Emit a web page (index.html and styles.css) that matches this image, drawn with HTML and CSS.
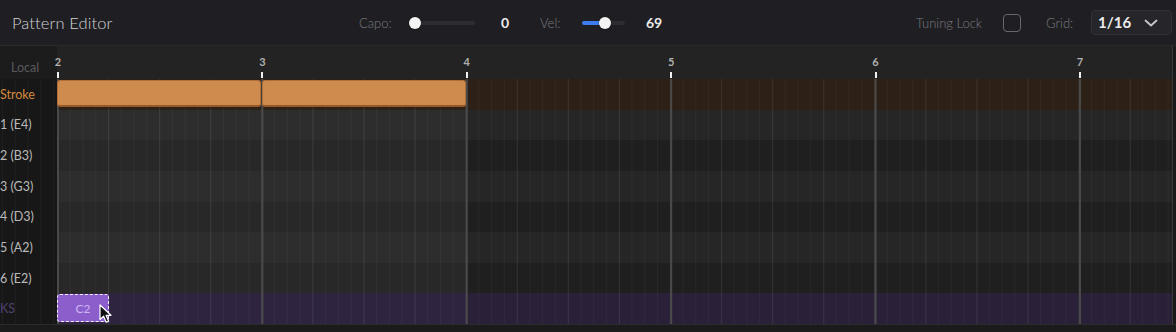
FILE: index.html
```html
<!DOCTYPE html>
<html>
<head>
<meta charset="utf-8">
<link rel="stylesheet" href="styles.css">
</head>
<body>
<div class="app">
  <header class="topbar">
    <div class="title">Pattern Editor</div>
    <div class="lbl w-capo">Capo:</div>
    <div class="slider s-capo"><div class="track"></div><div class="fill" style="width:0px"></div><div class="knob" style="left:0px"></div></div>
    <div class="val v-capo">0</div>
    <div class="lbl w-vel">Vel:</div>
    <div class="slider s-vel"><div class="track"></div><div class="fill" style="width:23px"></div><div class="knob" style="left:17px"></div></div>
    <div class="val v-vel">69</div>
    <div class="lbl w-lock">Tuning Lock</div>
    <div class="checkbox"></div>
    <div class="lbl w-grid">Grid:</div>
    <div class="dropdown">
      <span class="dd-val">1/16</span>
      <svg class="chev" width="14" height="8" viewBox="0 0 14 8"><path d="M1.5 1.5 L7 6.5 L12.5 1.5" fill="none" stroke="#c8c8cc" stroke-width="1.8" stroke-linecap="round" stroke-linejoin="round"/></svg>
    </div>
  </header>

  <div class="editor">
    <div class="main">
      <div class="line ruler-line">
        <div class="label-cell local">Local</div>
        <div class="ruler">
          <div class="bar"><span class="num">2</span></div>
          <div class="bar"><span class="num">3</span></div>
          <div class="bar"><span class="num">4</span></div>
          <div class="bar"><span class="num">5</span></div>
          <div class="bar"><span class="num">6</span></div>
          <div class="bar"><span class="num">7</span></div>
        </div>
      </div>

      <div class="line">
        <div class="label-cell"><span class="lab stroke-lab">Stroke</span></div>
        <div class="lane lane-stroke">
          <div class="note orange" style="left:0px;width:204px"></div>
          <div class="note orange" style="left:205px;width:204px"></div>
        </div>
      </div>
      <div class="line">
        <div class="label-cell"><span class="lab">1 (E4)</span></div>
        <div class="lane lane-a"></div>
      </div>
      <div class="line">
        <div class="label-cell"><span class="lab">2 (B3)</span></div>
        <div class="lane lane-b"></div>
      </div>
      <div class="line">
        <div class="label-cell"><span class="lab">3 (G3)</span></div>
        <div class="lane lane-a"></div>
      </div>
      <div class="line">
        <div class="label-cell"><span class="lab">4 (D3)</span></div>
        <div class="lane lane-b"></div>
      </div>
      <div class="line">
        <div class="label-cell"><span class="lab">5 (A2)</span></div>
        <div class="lane lane-a"></div>
      </div>
      <div class="line">
        <div class="label-cell"><span class="lab">6 (E2)</span></div>
        <div class="lane lane-b"></div>
      </div>
      <div class="line">
        <div class="label-cell"><span class="lab ks-lab">KS</span></div>
        <div class="lane lane-ks">
          <div class="note ks" style="left:0px;width:52px">C2</div>
          <svg class="cursor" width="14" height="20" viewBox="0 0 14 20"><path d="M1 1 L1 15.5 L4.6 12.2 L7.2 18.2 L9.6 17.2 L7.1 11.3 L12 11.3 Z" fill="#111" stroke="#fff" stroke-width="1.2" stroke-linejoin="round"/></svg>
        </div>
      </div>
    </div>
    <div class="vscroll"></div>
  </div>
  <div class="footer"></div>
</div>
</body>
</html>
```

FILE: styles.css
```css
* { box-sizing: border-box; }
html, body { margin: 0; padding: 0; }
body {
  width: 1176px;
  height: 332px;
  overflow: hidden;
  background: #1b1b1d;
  font-family: "Lato", "Inter", "Liberation Sans", sans-serif;
}
.app { display: flex; flex-direction: column; width: 1176px; height: 332px; }

/* ---------- top bar ---------- */
.topbar {
  height: 46px;
  flex: none;
  display: flex;
  align-items: center;
  padding-left: 12px;
  background: #1f1f23;
  border-bottom: 1px solid #2a2a2e;
}
.title { width: 347px; flex: none; font-size: 16.5px; font-weight: 300; color: #d2d2d5; letter-spacing: 0.1px; }
.lbl { flex: none; font-size: 13px; font-weight: 300; color: #7a7a7f; }
.w-capo { width: 50px; }
.w-vel { width: 42px; margin-left: 31px; }
.w-lock { width: 87px; }
.w-grid { width: 45px; margin-left: 25px; }

.slider { position: relative; flex: none; height: 14px; }
.s-capo { width: 66px; }
.s-vel { width: 43px; }
.slider .track { position: absolute; left: 0; right: 0; top: 5px; height: 4px; border-radius: 2px; background: #2c2c32; }
.slider .fill { position: absolute; left: 0; top: 5px; height: 4px; border-radius: 2px; background: #3d7bf0; }
.slider .knob { position: absolute; top: 1px; width: 12px; height: 12px; border-radius: 50%; background: #f4f4f4; box-shadow: 0 0 2px rgba(0,0,0,.5); }

.val { flex: none; font-size: 14px; font-weight: 700; color: #ececec; }
.v-capo { width: 34px; text-align: right; }
.v-vel { width: 270px; margin-left: 21px; }

.checkbox { flex: none; width: 18px; height: 18px; border: 1.5px solid #66666b; border-radius: 4px; }

.dropdown {
  flex: none;
  width: 81px;
  height: 25px;
  margin-top: -1px;
  display: flex;
  align-items: center;
  justify-content: space-between;
  padding: 0 13px 0 6px;
  background: #25252a;
  border: 1px solid #303036;
  border-radius: 4px;
}
.dd-val { font-size: 15px; font-weight: 700; color: #ececec; }
.chev { display: block; margin-top: 1px; }

/* ---------- editor ---------- */
.editor { flex: none; display: flex; height: 278px; }
.main { width: 1172px; flex: none; display: flex; flex-direction: column; overflow: hidden; }
.vscroll { width: 4px; flex: none; background: #1a1a1a; border-left: 1px solid #3a3a3c; }

.line { display: flex; height: 30.625px; flex: none; }
.ruler-line { height: 33px; }

.label-cell {
  width: 57px;
  flex: none;
  display: flex;
  align-items: center;
  overflow: hidden;
  background-color: #171717;
  background-image: linear-gradient(to right, rgba(255,255,255,0.035) 0 1px, transparent 1px);
  background-size: 12.775px 100%;
  background-position: 2px 0;
}
.local {
  background: #1c1c1c;
  justify-content: flex-start;
  padding-left: 11px;
  padding-top: 9px;
  font-size: 12.5px;
  font-weight: 400;
  color: #5a5a5e;
}
.lab { white-space: nowrap; font-size: 12.5px; color: #bababa; }
.stroke-lab { color: #d4893c; }
.ks-lab { color: #4f4170; }

.ruler { flex: 1; display: flex; background: #232323; }
.bar { position: relative; flex: 0 0 204.4px; }
.bar .num {
  position: absolute;
  left: 0;
  top: 9px;
  transform: translateX(-50%);
  margin-left: 1px;
  font-size: 11px;
  font-weight: 700;
  color: #b0b0b0;
}
.bar::after {
  content: "";
  position: absolute;
  left: 0;
  bottom: 1px;
  width: 2px;
  height: 6px;
  background: #f0f0f0;
}

.lane {
  position: relative;
  flex: 1;
  --in: #2d2d2d;
  --out: #262626;
  background-image:
    linear-gradient(to right, #4a4a4a 0 2px, transparent 2px),
    linear-gradient(to right, rgba(255,255,255,0.06) 0 1px, transparent 1px),
    linear-gradient(to right, rgba(255,255,255,0.035) 0 1px, transparent 1px),
    linear-gradient(to right, var(--in) 0 409px, var(--out) 409px);
  background-size: 204.4px 100%, 51.1px 100%, 12.775px 100%, 100% 100%;
  background-repeat: repeat-x, repeat-x, repeat-x, no-repeat;
}
.lane-a { --in: #2d2d2d; --out: #262626; }
.lane-b { --in: #282828; --out: #1f1f1f; }
.lane-stroke { --in: #2c2017; --out: #2c2017; }
.lane-ks { --in: #2e2440; --out: #2a2037; }

.note { position: absolute; top: 1px; height: 27px; border-radius: 3px; }
.orange {
  background: #cf8a4e;
  border: 1px solid #b0703a;
  border-bottom: 2px solid #965a2a;
}
.ks {
  top: 1px;
  height: 28px;
  background: #8c5ecb;
  border: 1.5px dashed #f2eefa;
  display: flex;
  align-items: center;
  justify-content: center;
  font-size: 12px;
  color: #cdb5f2;
}
.cursor { position: absolute; left: 42px; top: 11px; }

.footer { flex: 1; background: #1b1b1b; border-top: 1px solid #2b2b2d; }
```
